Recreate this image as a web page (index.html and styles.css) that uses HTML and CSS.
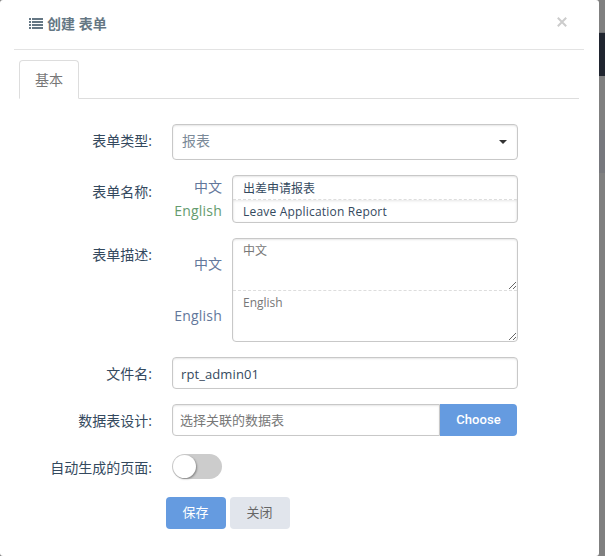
FILE: index.html
```html
<!DOCTYPE html>
<html lang="zh-CN">
<head>
<meta charset="utf-8">
<title>创建 表单</title>
<link rel="stylesheet" href="styles.css">
</head>
<body>
<main class="modal">
  <header class="modal-header">
    <svg class="list-icon" width="14" height="11" viewBox="0 0 14 11" fill="currentColor" shape-rendering="crispEdges"><path d="M0 0h2v2H0zM3 0h11v2H3zM0 3h2v2H0zM3 3h11v2H3zM0 6h2v2H0zM3 6h11v2H3zM0 9h2v2H0zM3 9h11v2H3z"/></svg>
    <h1 class="title">创建 表单</h1>
    <button class="close" aria-label="关闭"><svg width="10" height="10" viewBox="0 0 10 10" fill="none" stroke="currentColor" stroke-width="2"><path d="M.8.8l8.4 8.4M9.2.8L.8 9.2"/></svg></button>
  </header>
  <nav class="tabs"><a class="tab">基本</a></nav>
  <form class="form">
    <div class="row row-type">
      <label class="label">表单类型:</label>
      <div class="select box"><span>报表</span><i class="caret"></i></div>
    </div>
    <div class="row row-name">
      <label class="label">表单名称:</label>
      <div class="multi">
        <div class="langs"><span class="lang">中文</span><span class="lang en done">English</span></div>
        <div class="stack box">
          <input class="line" value="出差申请报表">
          <input class="line latin" value="Leave Application Report">
        </div>
      </div>
    </div>
    <div class="row row-desc">
      <label class="label">表单描述:</label>
      <div class="multi">
        <div class="langs"><span class="lang">中文</span><span class="lang en">English</span></div>
        <div class="stack box">
          <textarea class="area" placeholder="中文"></textarea>
          <textarea class="area" placeholder="English"></textarea>
        </div>
      </div>
    </div>
    <div class="row row-file">
      <label class="label">文件名:</label>
      <input class="input box file" value="rpt_admin01">
    </div>
    <div class="row row-data">
      <label class="label">数据表设计:</label>
      <div class="group">
        <input class="input box joined" placeholder="选择关联的数据表">
        <button type="button" class="choose">Choose</button>
      </div>
    </div>
    <div class="row row-auto">
      <label class="label">自动生成的页面:</label>
      <span class="switch"><i class="knob"></i></span>
    </div>
    <div class="actions">
      <button type="button" class="btn primary">保存</button>
      <button type="button" class="btn">关闭</button>
    </div>
  </form>
</main>
</body>
</html>
```
FILE: styles.css
```css
* { box-sizing: border-box; }
body {
  margin: 0;
  height: 556px;
  overflow: hidden;
  background: linear-gradient(#808080 0 32px, #6f7072 32px 33px, #20252f 33px 76px, #808080 76px 130px, #77787d 130px 173px, #808080 173px);
  font: 14px/20px "Open Sans", "Noto Sans CJK SC", sans-serif;
  color: #34495e;
}
input, textarea, button { font: inherit; color: inherit; margin: 0; outline: 0; }
.modal { width: 599px; height: 556px; padding: 0 15px 0 14px; background: #fff; border-radius: 3px; }
.modal-header { height: 50px; padding: 0 17px 0 15px; display: flex; align-items: flex-start; border-bottom: 1px solid #e3e3e3; color: #657784; }
.list-icon { margin-top: 18px; }
.title { margin: 14px 0 0 4px; flex: 1; font-size: 14px; line-height: 20px; font-weight: 700; }
.close { margin-top: 17px; padding: 0; border: 0; background: none; color: #ccc; line-height: 0; }
.tabs { display: flex; margin: 10px 5px 0; height: 39px; border-bottom: 1px solid #ddd; }
.tab { width: 60px; height: 39px; border: 1px solid #ddd; border-bottom-color: #fff; border-radius: 4px 4px 0 0; text-align: center; line-height: 38px; color: #777; }
.form { padding-top: 25px; }
.row { display: grid; grid-template-columns: 138px 346px; column-gap: 20px; align-items: start; }
.label { text-align: right; white-space: nowrap; }
.box { border: 1px solid #c8c8c8; border-radius: 4px; background: #fff; box-shadow: inset 0 1px 2px rgba(0,0,0,.1); }
.row-type { height: 51px; }
.row-name { height: 63px; }
.row-desc { height: 119px; }
.row-file, .row-data { height: 47px; }
.row-auto { height: 46px; }
.row .label { padding-top: 7px; }
.select { height: 36px; display: flex; align-items: center; justify-content: space-between; padding: 0 10px 2px 9px; color: #7b8a98; }
.caret { border: 4px solid transparent; border-top-color: #333; border-bottom: 0; margin-top: 2px; }
.multi { display: flex; justify-content: space-between; }
.langs { width: 50px; text-align: right; color: #63779b; }
.lang { display: block; line-height: 24px; }
.en { letter-spacing: .2px; }
.lang.done { color: #659b6e; }
.stack { width: 286px; overflow: hidden; }
.line { display: block; width: 100%; height: 22px; padding: 0 10px; border: 0; background: none; font-size: 12px; }
.line:first-child { height: 24px; padding-top: 1px; border-bottom: 1px dashed #ddd; }
.latin { letter-spacing: .2px; box-shadow: inset 0 1px 3px rgba(0,0,0,.1); }
.row-desc .lang { line-height: 52px; }
.area { display: block; width: 100%; height: 50px; padding: 3px 10px; border: 0; background: none; resize: both; font-size: 12px; line-height: 18px; }
.area:first-child { height: 52px; border-bottom: 1px dashed #ddd; }
::placeholder { color: #777; opacity: 1; }
.input { width: 100%; height: 32px; padding: 0 7px; font-size: 13px; }
.file { padding-left: 8px; padding-top: 1px; letter-spacing: .1px; }
.group { display: flex; }
.joined { width: 268px; border-radius: 4px 0 0 4px; }
.choose { width: 77px; height: 32px; padding: 0 0 1px; border: 0; border-radius: 0 4px 4px 0; background: #659be0; color: #fff; font: 500 13px/20px Roboto, sans-serif; letter-spacing: .1px; }
.switch { width: 50px; height: 25px; margin-top: 3px; padding: 1px; border-radius: 13px; background: #ccc; }
.knob { display: block; width: 23px; height: 23px; border-radius: 50%; background: #fff; box-shadow: 1px 1px 2px rgba(0,0,0,.35); }
.actions { display: flex; gap: 4px; margin-left: 152px; }
.btn { width: 60px; height: 32px; padding: 0 1px 3px 0; border: 0; border-radius: 4px; background: #e1e5ec; color: #666; font-size: 13px; }
.primary { background: #659be0; color: #fff; }
```
